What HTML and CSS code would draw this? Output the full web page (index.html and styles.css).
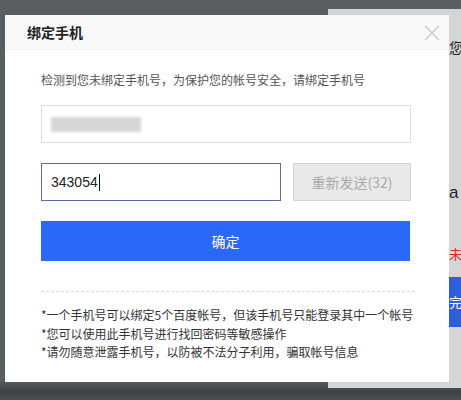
FILE: index.html
```html
<!DOCTYPE html>
<html>

<head>
    <meta name="viewport" content="width=device-width, initial-scale=1.0">
    <title>绑定手机</title>
    <link rel="stylesheet" href="styles.css">
</head>

<body>

    <div class="page">
      <div class="panel">
        <p class="panel-hi">您</p>
        <p class="panel-a">a</p>
        <p class="panel-warn">未</p>
        <div class="panel-btn">完善</div>
      </div>
    </div>

    <div class="dialog">
      <div class="dialog-head">
        <h1>绑定手机</h1>
        <svg class="close" width="16" height="16" viewBox="0 0 16 16">
          <path d="M1 1 L15 15 M15 1 L1 15" stroke="#c9c9c9" stroke-width="1.4" fill="none"/>
        </svg>
      </div>

      <div class="dialog-body">
        <p class="tip">检测到您未绑定手机号，为保护您的帐号安全，请绑定手机号</p>

        <div class="field phone">
          <span class="blur"></span>
        </div>

        <div class="code-row">
          <div class="field code focused">343054<span class="caret"></span></div>
          <button class="resend">重新发送(32)</button>
        </div>

        <button class="submit">确定</button>

        <hr class="sep">

        <ul class="notes">
          <li>*一个手机号可以绑定5个百度帐号，但该手机号只能登录其中一个帐号</li>
          <li>*您可以使用此手机号进行找回密码等敏感操作</li>
          <li>*请勿随意泄露手机号，以防被不法分子利用，骗取帐号信息</li>
        </ul>
      </div>
    </div>

</body>

</html>
```

FILE: styles.css
```css
body {
    margin: 0;
    height: 400px;
    overflow: hidden;
    background: linear-gradient(#5a5e60 0, #5a5e60 380px, #3f4244 392px, #4d5052 400px);
    font-family: "Noto Sans CJK SC", "Liberation Sans", sans-serif;
}

.page {
    padding-top: 9px;
    display: flex;
    justify-content: flex-end;
}

.panel {
    width: 133px;
    height: 379px;
    background: #d5d5d5;
    position: relative;
    overflow: hidden;
}

.panel p {
    margin: 0;
    position: absolute;
    left: 121px;
    font-size: 14px;
    color: #222;
}

.panel-hi {
    top: 28px;
}

.panel-a {
    top: 174px;
    font-family: "Liberation Sans", sans-serif;
    font-size: 17px !important;
}

.panel-warn {
    top: 235px;
    color: #d9262b !important;
    font-size: 13px !important;
}

.panel-btn {
    position: absolute;
    left: 118px;
    top: 268px;
    width: 40px;
    height: 50px;
    background: #2f5fd8;
    color: #fff;
    font-size: 13px;
    line-height: 50px;
    padding-left: 3px;
}

.dialog {
    position: absolute;
    left: 5px;
    top: 15px;
    width: 444px;
    height: 367px;
    background: #fff;
    box-sizing: border-box;
}

.dialog-head {
    height: 35px;
    background: #f8f8f8;
    border-bottom: 1px solid #f0f0f0;
    box-sizing: border-box;
    display: flex;
    align-items: center;
    justify-content: space-between;
    padding: 0 9px 0 22px;
}

.dialog-head h1 {
    margin: 0;
    font-size: 14px;
    font-weight: 700;
    color: #222;
}

.close {
    margin-top: 1px;
}

.dialog-body {
    padding: 0 38px 0 36px;
}

.tip {
    margin: 21px 0 0;
    font-size: 12px;
    line-height: 17px;
    color: #555;
}

.field {
    box-sizing: border-box;
    height: 38px;
    border: 1px solid #dcdcdc;
    background: #fff;
    display: flex;
    align-items: center;
    padding-left: 9px;
    font-size: 14px;
    color: #222;
    font-family: "Liberation Sans", "Noto Sans CJK SC", sans-serif;
}

.phone {
    margin-top: 17px;
}

.blur {
    width: 90px;
    height: 15px;
    background: #d6d6d6;
    filter: blur(1.5px);
}

.code-row {
    display: flex;
    gap: 12px;
    margin-top: 20px;
}

.code {
    flex: 0 0 240px;
}

.focused {
    border-color: #5b6b9c;
}

.caret {
    width: 1px;
    height: 17px;
    background: #111;
    margin-left: 1px;
}

.resend {
    flex: 1;
    height: 38px;
    border: 1px solid #d2d2d2;
    background: #e9e9e9;
    color: #a9a9a9;
    font-size: 14px;
    font-family: "Noto Sans CJK SC", "Liberation Sans", sans-serif;
    padding: 0;
}

.submit {
    display: block;
    width: 369px;
    height: 40px;
    margin-top: 20px;
    border: none;
    background: #2a68f7;
    color: #fff;
    font-size: 14px;
    font-family: "Noto Sans CJK SC", "Liberation Sans", sans-serif;
}

.sep {
    margin: 30px 0 0;
    width: 374px;
    border: none;
    border-top: 1px dashed #dadada;
}

.notes {
    list-style: none;
    margin: 14px 0 0;
    padding: 0;
    font-size: 12px;
    line-height: 18.5px;
    color: #333;
    white-space: nowrap;
}
```
